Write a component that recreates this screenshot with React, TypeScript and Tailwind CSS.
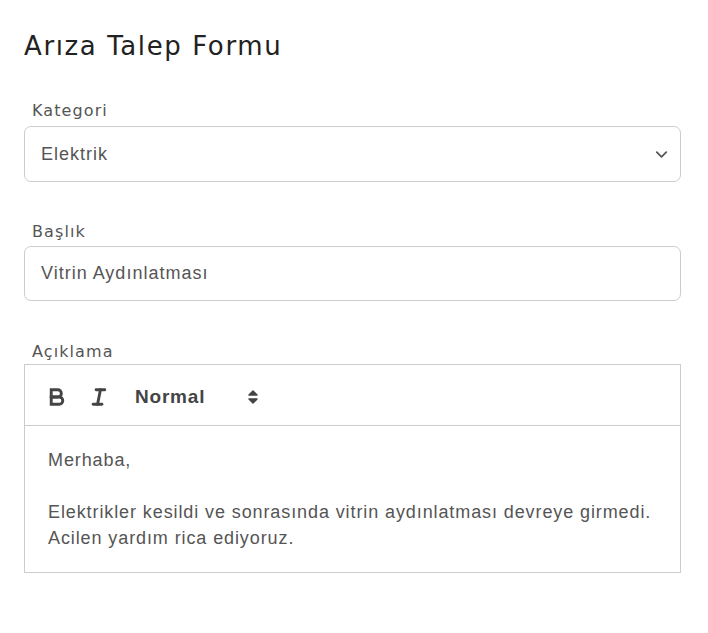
import { ChevronDown } from 'lucide-react';

function Label({ children }: { children: string }) {
    return (
        <div className="pl-[8px] pt-[2px] text-[16px] leading-5 text-[#555] tracking-[1.1px] [font-family:'DejaVu_Sans',sans-serif]">
            {children}
        </div>
    );
}

// quill-style toolbar icons
function BoldIcon() {
    return (
        <svg width="26" height="26" viewBox="0 0 18 18" fill="none" stroke="#444" strokeWidth="2">
            <path d="M5,4H9.5A2.5,2.5,0,0,1,12,6.5v0A2.5,2.5,0,0,1,9.5,9H5A0,0,0,0,1,5,9V4A0,0,0,0,1,5,4Z" />
            <path d="M5,9h5.5A2.5,2.5,0,0,1,13,11.5v0A2.5,2.5,0,0,1,10.5,14H5a0,0,0,0,1,0,0V9A0,0,0,0,1,5,9Z" />
        </svg>
    );
}

function ItalicIcon() {
    return (
        <svg width="26" height="26" viewBox="0 0 18 18" fill="none" stroke="#444" strokeWidth="2" strokeLinecap="round">
            <line x1="7" x2="13" y1="4" y2="4" />
            <line x1="5" x2="11" y1="14" y2="14" />
            <line x1="8" x2="10" y1="14" y2="4" />
        </svg>
    );
}

function Toolbar() {
    return (
        <div className="flex items-center h-[61px] border-b border-[#ccc] pl-[19px] pt-[4px] text-[#444]">
            <BoldIcon />
            <div className="ml-[16px]">
                <ItalicIcon />
            </div>
            <span className="ml-[23px] text-[19px] font-bold tracking-[0.8px] [font-family:'Liberation_Sans',Arial,sans-serif]">
                Normal
            </span>
            <svg className="ml-[43px]" width="10" height="16" viewBox="0 0 10 16">
                <polygon points="1,6 5,2 9,6" fill="#444" stroke="#444" strokeWidth="1.5" strokeLinejoin="round" />
                <polygon points="1,10 5,14 9,10" fill="#444" stroke="#444" strokeWidth="1.5" strokeLinejoin="round" />
            </svg>
        </div>
    );
}

export default function App() {
    return (
        <div className="bg-white w-[708px] h-[633px] pl-[24px] pt-[28px]">
            <div className="w-[657px] flex flex-col">
                <h1 className="text-[26px] leading-9 text-[#222] tracking-[1.6px] [font-family:'DejaVu_Sans',sans-serif]">
                    Arıza Talep Formu
                </h1>

                <div className="mt-[35px]">
                    <Label>Kategori</Label>
                    <div className="mt-[5px] h-[56px] border border-[#ccc] rounded-[7px] flex items-center justify-between pl-[16px] pr-[9px]">
                        <span className="text-[18px] text-[#555] tracking-[1px] [font-family:'Liberation_Sans',Arial,sans-serif]">
                            Elektrik
                        </span>
                        <ChevronDown className="w-[19px] h-[19px] text-[#555]" strokeWidth={2.2} />
                    </div>
                </div>

                <div className="mt-[38px]">
                    <Label>Başlık</Label>
                    <div className="mt-[4px] h-[55px] border border-[#ccc] rounded-[7px] flex items-center pl-[16px]">
                        <span className="text-[18px] text-[#555] tracking-[1px] [font-family:'Liberation_Sans',Arial,sans-serif]">
                            Vitrin Aydınlatması
                        </span>
                    </div>
                </div>

                <div className="mt-[39px]">
                    <Label>Açıklama</Label>
                    <div className="mt-[2px] border border-[#ccc]">
                        <Toolbar />
                        <div className="h-[146px] pl-[23px] pt-[21px] text-[18px] leading-[26px] text-[#555] tracking-[0.9px] [font-family:'Liberation_Sans',Arial,sans-serif]">
                            <p>Merhaba,</p>
                            <p>&nbsp;</p>
                            <p>Elektrikler kesildi ve sonrasında vitrin aydınlatması devreye girmedi.</p>
                            <p>Acilen yardım rica ediyoruz.</p>
                        </div>
                    </div>
                </div>
            </div>
        </div>
    );
}
